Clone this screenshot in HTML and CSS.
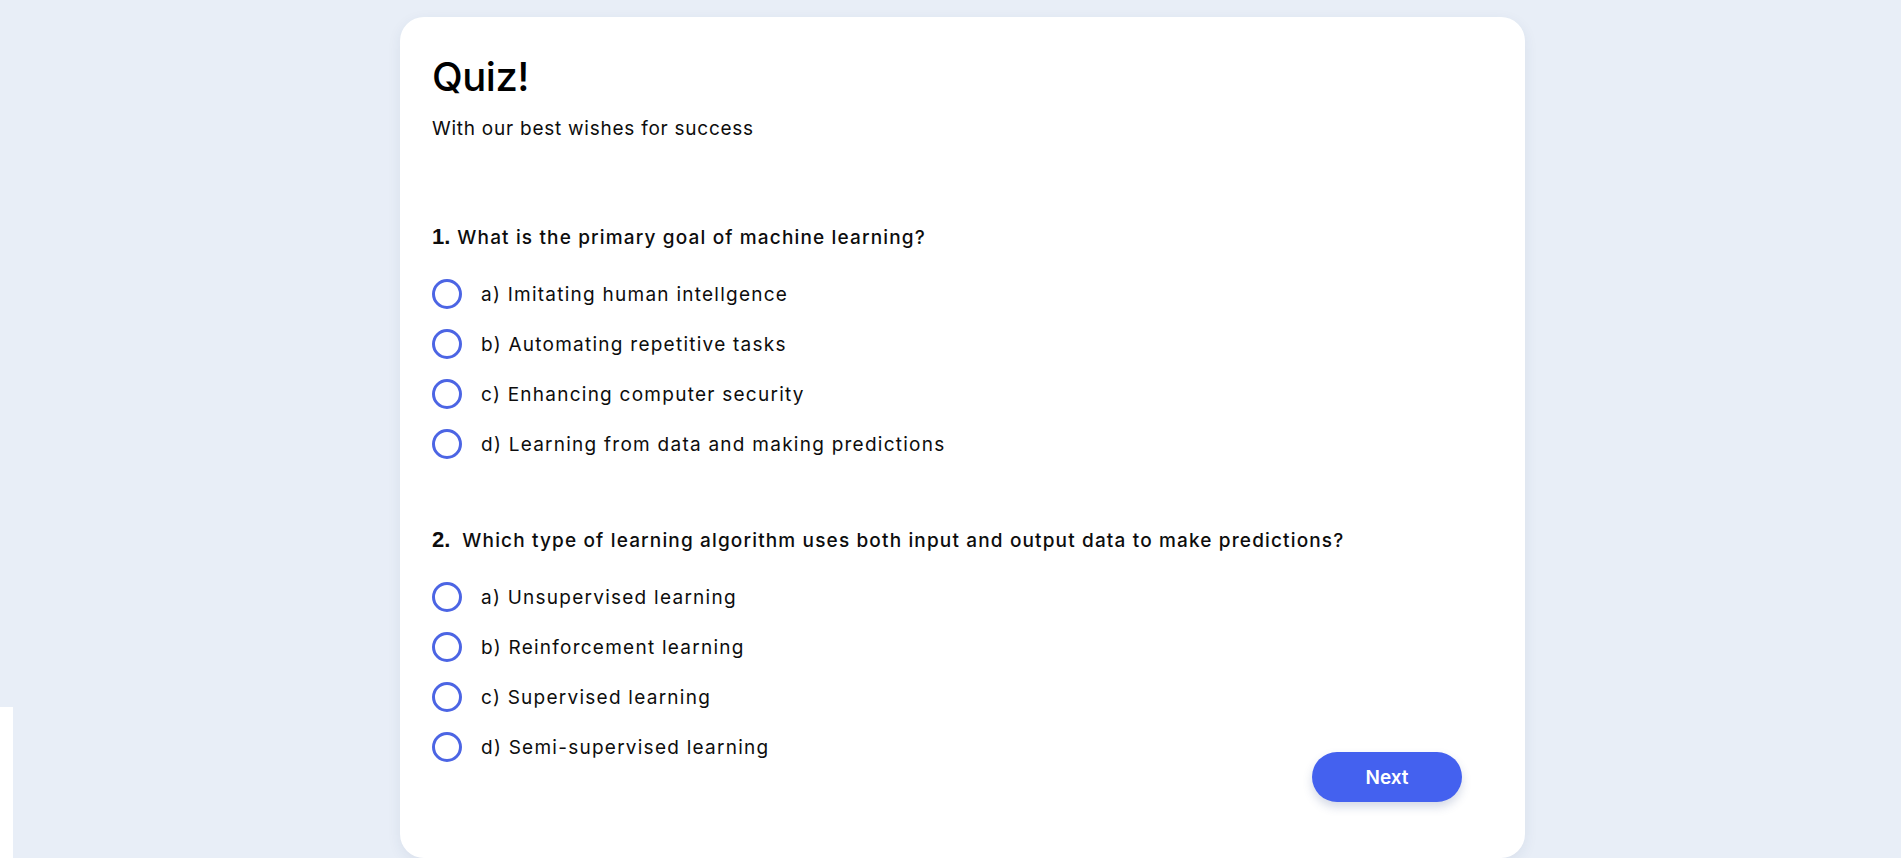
FILE: index.html
```html
<!DOCTYPE html>
<html lang="en">
<head>
<meta charset="utf-8">
<title>Quiz</title>
<link rel="stylesheet" href="styles.css">
</head>
<body>
<div class="edge"></div>
<main class="card">
  <h1 class="title">Quiz!</h1>
  <p class="subtitle">With our best wishes for success</p>

  <section class="question q-first">
    <h2 class="q-title"><span class="q-num q-num-one">1.</span><span class="q-text">What is the primary goal of machine learning?</span></h2>
    <ul class="options">
      <li class="option"><span class="radio"></span><span class="opt-text">a) Imitating human intellgence</span></li>
      <li class="option"><span class="radio"></span><span class="opt-text">b) Automating repetitive tasks</span></li>
      <li class="option"><span class="radio"></span><span class="opt-text">c) Enhancing computer security</span></li>
      <li class="option"><span class="radio"></span><span class="opt-text">d) Learning from data and making predictions</span></li>
    </ul>
  </section>

  <section class="question q-next">
    <h2 class="q-title"><span class="q-num">2.</span><span class="q-text">Which type of learning algorithm uses both input and output data to make predictions?</span></h2>
    <ul class="options">
      <li class="option"><span class="radio"></span><span class="opt-text">a) Unsupervised learning</span></li>
      <li class="option"><span class="radio"></span><span class="opt-text">b) Reinforcement learning</span></li>
      <li class="option"><span class="radio"></span><span class="opt-text">c) Supervised learning</span></li>
      <li class="option"><span class="radio"></span><span class="opt-text">d) Semi-supervised learning</span></li>
    </ul>
  </section>

  <div class="footer">
    <button class="next-btn" type="button">Next</button>
  </div>
</main>
</body>
</html>
```

FILE: styles.css
```css
html, body {
  margin: 0;
  padding: 0;
}
body {
  background: #e8eef7;
  font-family: Inter, "Noto Sans", "Liberation Sans", sans-serif;
  color: #0d0d0d;
  height: 858px;
  overflow: hidden;
  position: relative;
}
.edge {
  position: absolute;
  left: 0;
  top: 707px;
  width: 13px;
  height: 151px;
  background: #ffffff;
}
.card {
  box-sizing: border-box;
  width: 1125px;
  margin: 17px 0 0 400px;
  background: #ffffff;
  border-radius: 24px;
  box-shadow: 0 4px 14px rgba(40, 60, 100, 0.08);
  padding: 30px 32px 56px;
}
.title {
  margin: 0;
  font-size: 40px;
  line-height: 60px;
  font-weight: 500;
  color: #000;
  letter-spacing: -0.5px;
}
.subtitle {
  margin: 8px 0 0;
  font-size: 19px;
  line-height: 27px;
  font-weight: 400;
  letter-spacing: 0.75px;
}
.question {
  margin: 0;
}
.q-first {
  margin-top: 80px;
}
.q-next {
  margin-top: 56px;
}
.q-title {
  margin: 0;
  display: flex;
  align-items: center;
  height: 30px;
  font-size: 19px;
  font-weight: 500;
  letter-spacing: 1.15px;
}
.q-num {
  font-family: "Liberation Sans", Arial, sans-serif;
  font-weight: 700;
  font-size: 22px;
  letter-spacing: 0;
  margin-right: 12px;
}
.q-num-one {
  margin-right: 7px;
}
.options {
  list-style: none;
  margin: 17px 0 0;
  padding: 0;
}
.option {
  display: flex;
  align-items: center;
  height: 50px;
  gap: 19px;
  font-size: 19px;
  letter-spacing: 1.25px;
}
.radio {
  box-sizing: border-box;
  width: 30px;
  height: 30px;
  border: 3px solid #4c65e4;
  border-radius: 50%;
  flex: none;
}
.footer {
  display: flex;
  justify-content: flex-end;
  margin-top: -20px;
  padding-right: 31px;
}
.next-btn {
  width: 150px;
  height: 50px;
  border: none;
  border-radius: 25px;
  background: #4461ef;
  color: #ffffff;
  font-family: Inter, "Noto Sans", sans-serif;
  font-size: 19px;
  font-weight: 600;
  box-shadow: 0 5px 10px rgba(60, 80, 140, 0.22);
}
```
